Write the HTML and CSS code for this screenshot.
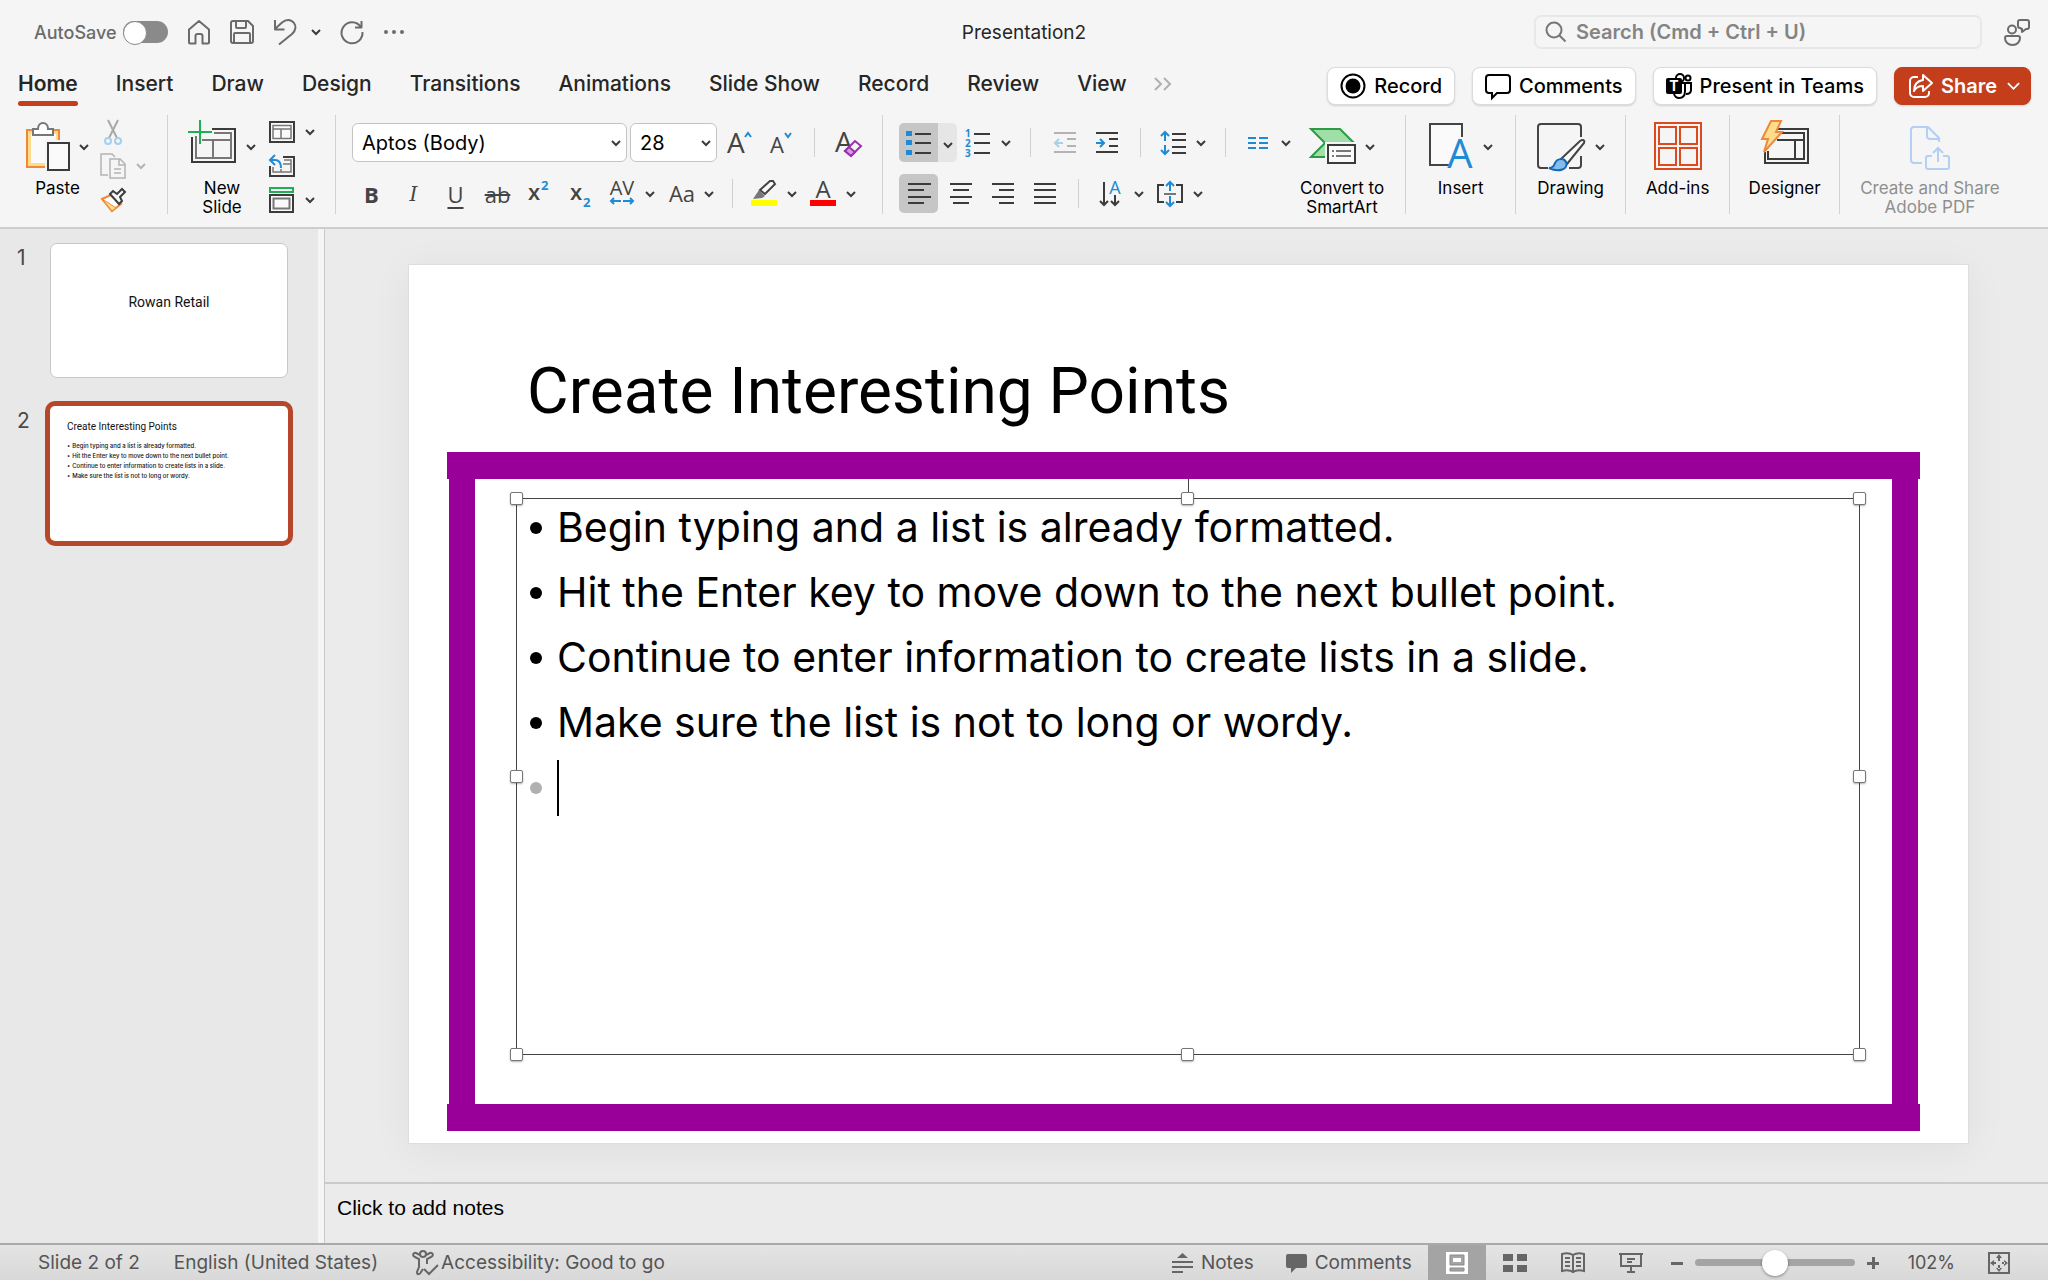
FILE: index.html
```
<!DOCTYPE html>
<html lang="en">
<head>
    <meta charset="UTF-8">
    <title>Presentation2</title>
    <link rel="stylesheet" href="styles.css">
</head>
<body>

    <svg class="sprite" aria-hidden="true">
        <symbol id="chev" viewBox="0 0 10 8">
            <path d="M1 2l4 4 4-4" fill="none" stroke="currentColor" stroke-width="2"/>
        </symbol>
    </svg>

    <header>
        <div class="titlebar">
            <div class="quick">
                <label class="autosave">AutoSave <input type="checkbox" class="toggle"></label>
                <button class="quick-btn" aria-label="Home">
                    <svg width="24" height="26" viewBox="0 0 24 26"><path d="M2 10.500L12 2l10 8.500V23.500a1 1 0 0 1-1 1h-5.500V17a2 2 0 0 0-2-2h-3a2 2 0 0 0-2 2v7.500H3a1 1 0 0 1-1-1z"/></svg>
                </button>
                <button class="quick-btn" aria-label="Save">
                    <svg width="24" height="24" viewBox="0 0 24 24"><path d="M3 1h15l5 5v15a2 2 0 0 1-2 2H3a2 2 0 0 1-2-2V3a2 2 0 0 1 2-2zM6 1v6a1 1 0 0 0 1 1h8a1 1 0 0 0 1-1V1M4 23v-9a1 1 0 0 1 1-1h14a1 1 0 0 1 1 1v9"/></svg>
                </button>
                <button class="quick-btn undo" aria-label="Undo">
                    <svg width="24" height="26" viewBox="0 0 24 26"><path d="M2 1v9.500h9.500M2 10L9 3.500C13 0 18 0 21 4s1 8-2 11L6 25.500"/></svg>
                    <svg class="chev"><use href="#chev"/></svg>
                </button>
                <button class="quick-btn" aria-label="Redo">
                    <svg width="24" height="24" viewBox="0 0 24 24"><path d="M21.500 1v6.500H15M20.800 7A10.500 10.500 0 1 0 22.500 12"/></svg>
                </button>
                <button class="quick-btn" aria-label="More">
                    <svg class="dots" width="22" height="6" viewBox="0 0 22 6"><circle cx="3" cy="3" r="2"/><circle cx="11" cy="3" r="2"/><circle cx="19" cy="3" r="2"/></svg>
                </button>
            </div>
            <div class="doc-name">Presentation2</div>
            <div class="title-right">
                <label class="search">
                    <svg width="22" height="22" viewBox="0 0 22 22"><circle cx="9" cy="9" r="7.500"/><path d="M14.500 14.500l6 6"/></svg>
                    <input type="text" placeholder="Search (Cmd + Ctrl + U)" aria-label="Search">
                </label>
                <button class="quick-btn" aria-label="Feedback">
                    <svg width="26" height="27" viewBox="0 0 26 27"><circle cx="8" cy="10.500" r="4"/><path d="M3 17h11a2 2 0 0 1 2 2c0 4-3 7-7.500 7S1 23 1 19a2 2 0 0 1 2-2zM16 1h7a2 2 0 0 1 2 2v5a2 2 0 0 1-2 2h-1l-4 3v-3l-2-1a2 2 0 0 1-2-2V3a2 2 0 0 1 2-2z"/></svg>
                </button>
            </div>
        </div>

        <div class="tab-row">
            <nav class="tabs">
                <button class="tab active">Home</button>
                <button class="tab">Insert</button>
                <button class="tab">Draw</button>
                <button class="tab">Design</button>
                <button class="tab">Transitions</button>
                <button class="tab">Animations</button>
                <button class="tab">Slide Show</button>
                <button class="tab">Record</button>
                <button class="tab">Review</button>
                <button class="tab">View</button>
                <button class="tab more" aria-label="More tabs">
                    <svg width="20" height="14" viewBox="0 0 20 14"><path d="M2 1l6 6-6 6M11 1l6 6-6 6"/></svg>
                </button>
            </nav>
            <div class="actions">
                <button class="action">
                    <svg width="26" height="26" viewBox="0 0 26 26"><circle cx="13" cy="13" r="11.500" fill="none" stroke="#000" stroke-width="2"/><circle cx="13" cy="13" r="7.500"/></svg>
                    Record
                </button>
                <button class="action">
                    <svg width="26" height="26" viewBox="0 0 26 26"><path d="M4 2h18a3 3 0 0 1 3 3v12a3 3 0 0 1-3 3H12l-5 5v-5H4a3 3 0 0 1-3-3V5a3 3 0 0 1 3-3z" fill="none" stroke="#000" stroke-width="2"/></svg>
                    Comments
                </button>
                <button class="action">
                    <svg width="26" height="26" viewBox="0 0 26 26">
                        <g fill="none" stroke="#000" stroke-width="2"><circle cx="14" cy="5" r="4"/><circle cx="22" cy="5" r="2.500"/><path d="M14 10h5v8c0 4-2 7-6 7-2 0-4-1-5-4M20 10h5v7c0 3-2 4-5 4"/></g>
                        <rect y="5" width="16" height="16" rx="2"/><text x="8" y="18" text-anchor="middle" fill="#fff" font-size="14" font-weight="700">T</text>
                    </svg>
                    Present in Teams
                </button>
                <button class="action share">
                    <svg width="24" height="24" viewBox="0 0 24 24"><path d="M9 3H5a4 4 0 0 0-4 4v12a4 4 0 0 0 4 4h11a4 4 0 0 0 4-4v-2M14 6V1l9 8-9 8v-5c-4 0-7 1-9 5 0-6 3-10 9-11z" fill="none" stroke="#fff" stroke-width="2" stroke-linejoin="round"/></svg>
                    Share
                    <svg class="chev-big" viewBox="0 0 14 8"><path d="M1 1l6 6 6-6" fill="none" stroke="#fff" stroke-width="2"/></svg>
                </button>
            </div>
        </div>

        <div class="ribbon">
            <!-- clipboard -->
            <div class="group clipboard">
                <button class="big">
                    <span class="big-icon">
                        <svg width="44" height="50" viewBox="0 0 44 50">
                            <path d="M1 8h32v37H1z" fill="#fddc8c" stroke="#f0883a" stroke-width="2"/>
                            <path d="M5 12h25v29H5z" fill="#fafafa"/>
                            <path d="M7 13V7h5c0-8 10-8 10 0h5v6z" fill="#fff" stroke="#777" stroke-width="2"/>
                            <path d="M19 18h27v32H19z" fill="#f5f5f5"/>
                            <path d="M22 21h21v27H22z" fill="#fafafa" stroke="#3b3b3b" stroke-width="2"/>
                        </svg>
                        <svg class="chev"><use href="#chev"/></svg>
                    </span>
                    Paste
                </button>
                <div class="stack">
                    <button class="mini" aria-label="Cut">
                        <svg width="26" height="26" viewBox="0 0 26 26"><path d="M8 1l9 18M18 1L9 19" fill="none" stroke="#a9a9a9" stroke-width="2"/><g fill="none" stroke="#a3cff0" stroke-width="2"><circle cx="8" cy="22" r="3"/><circle cx="18" cy="22" r="3"/></g></svg>
                    </button>
                    <button class="mini faded" aria-label="Copy">
                        <svg width="26" height="26" viewBox="0 0 26 26"><path d="M8 22H1V1h11l3 3M10 6h10l5 5v14H10zM19 6v6h6M14 16h7M14 20h7" fill="none" stroke="#b4b4b4" stroke-width="1.500"/></svg>
                        <svg class="chev"><use href="#chev"/></svg>
                    </button>
                    <button class="mini" aria-label="Format painter">
                        <svg width="26" height="26" viewBox="0 0 26 26"><path d="M11 8l10 9-9 7L2 12z" fill="#fff" stroke="#f0883a" stroke-width="2"/><path d="M3 13l4 2 9 6-4 3z" fill="#fddc8c" stroke="#f0883a"/><path d="M10 7l3-3 4 3 5-5 3 3-5 5 2 4-3 3z" fill="#f5f5f5" stroke="#3b3b3b" stroke-width="2"/></svg>
                    </button>
                </div>
            </div>

            <!-- slides -->
            <div class="group slides">
                <button class="big">
                    <span class="big-icon">
                        <svg width="49" height="50" viewBox="0 0 49 50">
                            <path d="M4 15v25h43V7H24" fill="none" stroke="#3b3b3b" stroke-width="2"/>
                            <path d="M8 14v22h35V11H26M14 18h29M25 18v18" fill="none" stroke="#777" stroke-width="2"/>
                            <path d="M12-2v24M0 10h24" stroke="#1faf54" stroke-width="2"/>
                        </svg>
                        <svg class="chev"><use href="#chev"/></svg>
                    </span>
                    New<br>Slide
                </button>
                <div class="stack">
                    <button class="mini" aria-label="Layout">
                        <svg width="26" height="22" viewBox="0 0 26 22"><path d="M1 1h24v20H1z" fill="#fafafa" stroke="#3b3b3b" stroke-width="2"/><path d="M4 4.500h18v13H4zM4 8h18M12 8v9" fill="none" stroke="#777" stroke-width="1.500"/></svg>
                        <svg class="chev"><use href="#chev"/></svg>
                    </button>
                    <button class="mini" aria-label="Reset">
                        <svg width="26" height="24" viewBox="0 0 26 24"><path d="M14 3h11v19H1V12" fill="none" stroke="#3b3b3b" stroke-width="2"/><path d="M15 6h7v12H4v-5M14 10h8M12 15v3" fill="none" stroke="#777" stroke-width="1.500"/><path d="M6 1L1 6l5 5M1 6h5c4 0 6 3 6 8" fill="none" stroke="#1e8bd4" stroke-width="2"/></svg>
                    </button>
                    <button class="mini" aria-label="Section">
                        <svg width="26" height="26" viewBox="0 0 26 26"><path d="M1 1h23v4H1z" fill="none" stroke="#1faf54" stroke-width="2"/><path d="M1 8h23v17H1z" fill="#fafafa" stroke="#3b3b3b" stroke-width="2"/><path d="M4.500 11.500h16v10h-16z" fill="none" stroke="#777" stroke-width="2"/></svg>
                        <svg class="chev"><use href="#chev"/></svg>
                    </button>
                </div>
            </div>

            <!-- font -->
            <div class="group font">
                <div class="rows">
                    <div class="row">
                        <span class="drop font-name">
                            <select aria-label="Font"><option>Aptos (Body)</option></select>
                            <svg class="chev"><use href="#chev"/></svg>
                        </span>
                        <span class="drop font-size">
                            <select aria-label="Font size"><option>28</option></select>
                            <svg class="chev"><use href="#chev"/></svg>
                        </span>
                        <button class="tool" aria-label="Grow font"><svg width="26" height="26" viewBox="0 0 26 26"><text x="0" y="23" font-size="28">A</text><path class="blue" d="M18 7l3-4 3 4"/></svg></button>
                        <button class="tool" aria-label="Shrink font"><svg width="26" height="26" viewBox="0 0 26 26"><text x="1" y="23" font-size="22">A</text><path class="blue" d="M16 3l3 4 3-4"/></svg></button>
                        <span class="sep"></span>
                        <button class="tool" aria-label="Clear formatting"><svg width="26" height="26" viewBox="0 0 26 26"><text x="0" y="22" font-size="28">A</text><path d="M10 21l10-10 6 5-10 10z" fill="#f5f5f5" stroke="#9b2fae" stroke-width="2"/><path d="M10 21l4-4 6 5-4 4z" fill="#d59adf" stroke="#9b2fae" stroke-width="2"/></svg></button>
                    </div>
                    <div class="row">
                        <button class="tool bold">B</button>
                        <button class="tool italic">I</button>
                        <button class="tool underline">U</button>
                        <button class="tool strike">ab</button>
                        <button class="tool" aria-label="Superscript"><svg width="26" height="26" viewBox="0 0 26 26"><text x="1" y="19" font-size="22" font-weight="600">x</text><text class="blue-text" x="14" y="9" font-size="13">2</text></svg></button>
                        <button class="tool" aria-label="Subscript"><svg width="26" height="26" viewBox="0 0 26 26"><text x="1" y="19" font-size="22" font-weight="600">x</text><text class="blue-text" x="14" y="26" font-size="13">2</text></svg></button>
                        <button class="split" aria-label="Character spacing">
                            <svg width="26" height="26" viewBox="0 0 26 26"><text x="13" y="14" font-size="20" text-anchor="middle">AV</text><path class="blue" d="M12 20H2M5 17l-3 3 3 3M14 20h10M21 17l3 3-3 3"/></svg>
                            <svg class="chev"><use href="#chev"/></svg>
                        </button>
                        <button class="split" aria-label="Change case">
                            <svg width="26" height="26" viewBox="0 0 26 26"><text x="14" y="21" font-size="22" text-anchor="middle">Aa</text></svg>
                            <svg class="chev"><use href="#chev"/></svg>
                        </button>
                        <span class="sep"></span>
                        <button class="split" aria-label="Highlight">
                            <svg width="26" height="26" viewBox="0 0 26 26"><path d="M0 19h26v6H0z" class="swatch yellow"/><path d="M9 9L19 0h3l2 3-10 10z" fill="#fafafa" stroke="#444" stroke-width="2"/><path d="M8 9l6 6-3 2-9 1z" fill="#777" stroke="none"/></svg>
                            <svg class="chev"><use href="#chev"/></svg>
                        </button>
                        <button class="split" aria-label="Font color">
                            <svg width="26" height="26" viewBox="0 0 26 26"><path d="M0 19h26v6H0z" class="swatch red"/><text x="13" y="17" font-size="24" text-anchor="middle">A</text></svg>
                            <svg class="chev"><use href="#chev"/></svg>
                        </button>
                    </div>
                </div>
            </div>

            <!-- paragraph -->
            <div class="group paragraph">
                <div class="rows">
                    <div class="row">
                        <span class="pair">
                            <button class="tool pressed" aria-label="Bullets"><svg width="26" height="26" viewBox="0 0 26 26"><path class="fill-blue" d="M0 1h6v5H0zM0 10h6v5H0zM0 20h6v5H0z"/><path d="M9 4h16M9 13h16M9 23h16"/></svg></button>
                            <button class="pair-arrow" aria-label="Bullet styles"><svg class="chev"><use href="#chev"/></svg></button>
                        </span>
                        <button class="split" aria-label="Numbering">
                            <svg width="26" height="26" viewBox="0 0 26 26"><g class="blue-text" font-size="10"><text x="0" y="7">1</text><text x="0" y="17">2</text><text x="0" y="27">3</text></g><path d="M9 4h16M9 13h16M9 23h16"/></svg>
                            <svg class="chev"><use href="#chev"/></svg>
                        </button>
                        <span class="sep"></span>
                        <button class="tool disabled" aria-label="Decrease indent"><svg width="24" height="24" viewBox="0 0 24 24"><path d="M1 2h22M14 8h9M14 15h9M1 21h22"/><path class="blue" d="M10 12H2M6 8l-4 4 4 4"/></svg></button>
                        <button class="tool" aria-label="Increase indent"><svg width="24" height="24" viewBox="0 0 24 24"><path d="M1 2h22M14 8h9M14 15h9M1 21h22"/><path class="blue" d="M1 12h8M5 8l4 4-4 4"/></svg></button>
                        <span class="sep"></span>
                        <button class="split" aria-label="Line spacing">
                            <svg width="26" height="26" viewBox="0 0 26 26"><path d="M12 4h14M12 10h14M12 17h14M12 23h14"/><path class="blue" d="M5 11V3M1 6l4-4 4 4M5 15v8M1 20l4 4 4-4"/></svg>
                            <svg class="chev"><use href="#chev"/></svg>
                        </button>
                        <span class="sep"></span>
                        <button class="split" aria-label="Columns">
                            <svg width="26" height="26" viewBox="0 0 26 26"><path class="blue" d="M3 8h8M3 13h8M3 18h8M14 8h9M14 13h9M14 18h9"/></svg>
                            <svg class="chev"><use href="#chev"/></svg>
                        </button>
                    </div>
                    <div class="row">
                        <button class="tool pressed" aria-label="Align left"><svg width="24" height="24" viewBox="0 0 24 24"><path d="M1 2h23M1 8h16M1 15h23M1 21h16"/></svg></button>
                        <button class="tool" aria-label="Align center"><svg width="24" height="24" viewBox="0 0 24 24"><path d="M1 2h22M4 8h16M1 15h22M4 21h16"/></svg></button>
                        <button class="tool" aria-label="Align right"><svg width="24" height="24" viewBox="0 0 24 24"><path d="M1 2h22M8 8h15M1 15h22M8 21h15"/></svg></button>
                        <button class="tool" aria-label="Justify"><svg width="24" height="24" viewBox="0 0 24 24"><path d="M1 2h22M1 8h22M1 15h22M1 21h22"/></svg></button>
                        <span class="sep"></span>
                        <button class="split" aria-label="Text direction">
                            <svg width="26" height="26" viewBox="0 0 26 26"><path d="M6 1v23M2 20l4 4 4-4M17 14v10M13 20l4 4 4-4"/><text class="blue-text thin" x="17" y="13" font-size="18" text-anchor="middle">A</text></svg>
                            <svg class="chev"><use href="#chev"/></svg>
                        </button>
                        <button class="split" aria-label="Align text">
                            <svg width="26" height="26" viewBox="0 0 26 26"><path d="M7 4H1v17h6M19 4h6v17h-6"/><path d="M7 13h12" stroke="#777"/><path class="blue" d="M13 10V2M9 5l4-4 4 4M13 15v9M9 21l4 4 4-4"/></svg>
                            <svg class="chev"><use href="#chev"/></svg>
                        </button>
                    </div>
                </div>
                <button class="big">
                    <span class="big-icon">
                        <svg width="46" height="50" viewBox="0 0 46 50">
                            <path d="M1 7h29l14 14v14H1l14-14z" fill="#a1dfa9" stroke="#2c9b47" stroke-width="2"/>
                            <path d="M15 20h32v24H15z" fill="#f5f5f5"/>
                            <path d="M18 23h27v18H18z" fill="#fafafa" stroke="#3b3b3b" stroke-width="2"/>
                            <path d="M22 29h2M26 29h15M22 34h2M26 34h15" stroke="#777" stroke-width="2"/>
                        </svg>
                        <svg class="chev"><use href="#chev"/></svg>
                    </span>
                    Convert to<br>SmartArt
                </button>
            </div>

            <div class="group command">
                <button class="big">
                    <span class="big-icon">
                        <svg width="45" height="50" viewBox="0 0 45 50"><path d="M20 43H1V2h32v13" fill="#fafafa" stroke="#444" stroke-width="2"/><path d="M18 48l12-32h4l12 32z" fill="#f5f5f5"/><text class="blue-text thin" x="31" y="46" font-size="40" text-anchor="middle">A</text></svg>
                        <svg class="chev"><use href="#chev"/></svg>
                    </span>
                    Insert
                </button>
            </div>
            <div class="group command">
                <button class="big">
                    <span class="big-icon">
                        <svg width="49" height="50" viewBox="0 0 49 50"><path d="M11 46H4a3 3 0 0 1-3-3V5a3 3 0 0 1 3-3h37a3 3 0 0 1 3 3v10M44 34v9a3 3 0 0 1-3 3H32" fill="none" stroke="#444" stroke-width="2"/><path d="M24 37L43 19c3-2 5-1 4 2L30 42z" fill="#fafafa" stroke="#444" stroke-width="2"/><path d="M12 46c5 0 5-3 6-5 2-5 9-5 11-1 3 7-7 11-17 6z" fill="#83bdec" stroke="#1668b5" stroke-width="2"/></svg>
                        <svg class="chev"><use href="#chev"/></svg>
                    </span>
                    Drawing
                </button>
            </div>
            <div class="group command narrow">
                <button class="big">
                    <span class="big-icon">
                        <svg width="48" height="50" viewBox="0 0 48 50"><path d="M1 1h46v46H1zM5 5h17v17H5zM26 5h17v17H26zM5 26h17v17H5zM26 26h17v17H26z" fill="none" stroke="#dc4a20" stroke-width="2"/></svg>
                    </span>
                    Add-ins
                </button>
            </div>
            <div class="group command">
                <button class="big">
                    <span class="big-icon">
                        <svg width="48" height="50" viewBox="0 0 48 50"><path d="M17 7h30v34H4V30" fill="none" stroke="#3b3b3b" stroke-width="2"/><path d="M18 11h25v26H7v-8M16 18h27M34 18v19" fill="none" stroke="#3b3b3b" stroke-width="2"/><path d="M10-1h10l-5 11h6L3 30 7 17H1z" fill="#fddc8c" stroke="#f0883a" stroke-width="2"/></svg>
                    </span>
                    Designer
                </button>
            </div>
            <div class="group last">
                <button class="big" disabled>
                    <span class="big-icon">
                        <svg width="40" height="50" viewBox="0 0 40 50"><g fill="none" stroke="#b3cff5" stroke-width="2"><path d="M12 41H4a3 3 0 0 1-3-3V8a3 3 0 0 1 3-3h14l11 11v4M17 5v9a3 3 0 0 0 3 3h9M22 34h-4a2 2 0 0 0-2 2v9a2 2 0 0 0 2 2h19a2 2 0 0 0 2-2v-9a2 2 0 0 0-2-2h-4M28 40V26M23 31l5-5 5 5"/></g></svg>
                    </span>
                    Create and Share<br>Adobe PDF
                </button>
            </div>
        </div>
    </header>

    <main>
        <aside class="thumbs">
            <div class="thumb-row">
                <span class="thumb-num">1</span>
                <button class="thumb first">Rowan Retail</button>
            </div>
            <div class="thumb-row">
                <span class="thumb-num">2</span>
                <button class="thumb selected">
                    <span class="thumb-title">Create Interesting Points</span>
                    <span class="thumb-line">Begin typing and a list is already formatted.</span>
                    <span class="thumb-line">Hit the Enter key to move down to the next bullet point.</span>
                    <span class="thumb-line">Continue to enter information to create lists in a slide.</span>
                    <span class="thumb-line">Make sure the list is not to long or wordy.</span>
                </button>
            </div>
        </aside>

        <section class="editor">
            <div class="stage">
                <article class="slide">
                    <h1>Create Interesting Points</h1>
                    <div class="frame">
                        <div class="frame-bar"></div>
                        <div class="frame-body">
                            <div class="textbox">
                                <ul>
                                    <li>Begin typing and a list is already formatted.</li>
                                    <li>Hit the Enter key to move down to the next bullet point.</li>
                                    <li>Continue to enter information to create lists in a slide.</li>
                                    <li>Make sure the list is not to long or wordy.</li>
                                    <li class="empty"><span class="caret"></span></li>
                                </ul>
                                <span class="stem"></span>
                                <span class="handle top left"></span>
                                <span class="handle top center"></span>
                                <span class="handle top right"></span>
                                <span class="handle middle left"></span>
                                <span class="handle middle right"></span>
                                <span class="handle bottom left"></span>
                                <span class="handle bottom center"></span>
                                <span class="handle bottom right"></span>
                            </div>
                        </div>
                        <div class="frame-bar"></div>
                    </div>
                </article>
            </div>
            <textarea class="notes" rows="1" placeholder="Click to add notes" aria-label="Notes"></textarea>
        </section>
    </main>

    <footer>
        <div class="status-left">
            <span>Slide 2 of 2</span>
            <span>English (United States)</span>
            <button class="status-btn access">
                <svg width="26" height="26" viewBox="0 0 26 26"><g fill="none" stroke="#666" stroke-width="2"><circle cx="11" cy="4" r="3"/><path d="M8 5L4 3C1 2 0 6 3 7l4 2v8L5 22c0 3 3 3 4 0l2-3M14 5l4-2c3-1 4 3 1 4l-4 2v5M12 19l5 5 9-9"/></g></svg>
                Accessibility: Good to go
            </button>
        </div>
        <div class="status-right">
            <button class="status-btn notes-btn">
                <svg width="21" height="20" viewBox="0 0 21 20"><path d="M5 5l5.500-5L16 5z"/><path d="M0 8h21v2H0zM0 13h21v2H0zM0 18h11v2H0z"/></svg>
                Notes
            </button>
            <button class="status-btn comments-btn">
                <svg width="21" height="20" viewBox="0 0 21 20"><path d="M2 1h17a2 2 0 0 1 2 2v10a2 2 0 0 1-2 2h-9l-5 5v-5H2a2 2 0 0 1-2-2V3a2 2 0 0 1 2-2z"/></svg>
                Comments
            </button>
            <button class="view current" aria-label="Normal view"><svg width="22" height="22" viewBox="0 0 22 22"><path d="M0 0h22v22H0z" fill="#fff"/><path d="M4 3h14v10H4zM4 16h14v3H4z" fill="#a4a4a4" stroke="#8a8a8a"/><path d="M7 6h8v4H7z" fill="#fff"/></svg></button>
            <button class="view" aria-label="Slide sorter"><svg width="24" height="18" viewBox="0 0 24 18"><path d="M0 0h10v7H0zM14 0h10v7H14zM0 11h10v7H0zM14 11h10v7H14z"/></svg></button>
            <button class="view" aria-label="Reading view"><svg width="24" height="22" viewBox="0 0 24 22"><path d="M1 2c4-1 8-1 11 1 3-2 7-2 11-1v17c-4-1-8-1-11 1-3-2-7-2-11-1zM12 3v18M4 6h5M4 10h5M4 14h5M15 6h5M15 10h5M15 14h5" fill="none" stroke="#666" stroke-width="2"/></svg></button>
            <button class="view" aria-label="Slide show"><svg width="24" height="20" viewBox="0 0 24 20"><path d="M0 1h24M2 2v11h20V2M8 6h8M8 9h5M12 13v6M8 19h8" fill="none" stroke="#666" stroke-width="2"/></svg></button>
            <div class="zoom">
                <button aria-label="Zoom out"><svg width="12" height="12" viewBox="0 0 12 12"><path d="M0 5h12v3H0z"/></svg></button>
                <input type="range" min="0" max="202" value="102" aria-label="Zoom">
                <button aria-label="Zoom in"><svg width="12" height="12" viewBox="0 0 12 12"><path d="M0 5h12v3H0zM5 0h3v12H5z"/></svg></button>
                <span class="percent">102%</span>
                <button aria-label="Fit slide to window"><svg width="22" height="22" viewBox="0 0 22 22"><path d="M1 1h20v20H1z" fill="none" stroke="#666" stroke-width="2"/><path d="M11 2l3 4h-6zM11 20l3-4h-6zM2 11l4-3v6zM20 11l-4-3v6zM10 5h2v4h-2zM10 13h2v4h-2zM5 10h3v2H5zM14 10h3v2h-3z"/></svg></button>
            </div>
        </div>
    </footer>

</body>
</html>
```
FILE: styles.css
```
* {
    box-sizing: border-box;
}

body {
    margin: 0;
    height: 100vh;
    display: flex;
    flex-direction: column;
    font-family: Inter, sans-serif;
    font-size: 18px;
    color: #262626;
    background: #f5f5f5;
}

button {
    padding: 0;
    border: none;
    background: none;
    font: inherit;
    color: inherit;
    cursor: pointer;
}

svg {
    flex: none;
    overflow: visible;
}

.sprite {
    position: absolute;
    width: 0;
    height: 0;
}

.chev {
    width: 10px;
    height: 8px;
    color: #3b3b3b;
}

/* title bar */
.titlebar {
    display: grid;
    grid-template-columns: 1fr auto 1fr;
    align-items: center;
    height: 64px;
    padding: 0 18px;
}

.quick {
    display: flex;
    align-items: center;
    gap: 19px;
    padding-left: 16px;
}

.autosave {
    display: flex;
    align-items: center;
    gap: 6px;
    color: #6b6b6b;
    font-weight: 500;
}

.toggle {
    appearance: none;
    width: 45px;
    height: 22px;
    margin: 0;
    border-radius: 11px;
    background: #8a8a8a;
}

.toggle::before {
    content: "";
    display: block;
    width: 22px;
    height: 22px;
    border: 1px solid #8a8a8a;
    border-radius: 50%;
    background: #fff;
}

.quick-btn {
    display: flex;
    align-items: center;
    gap: 14px;
    color: #444;
}

.quick-btn svg:not(.chev) {
    fill: none;
    stroke: #6b6b6b;
    stroke-width: 2;
    stroke-linejoin: round;
}

.quick-btn .dots {
    fill: #6b6b6b !important;
    stroke: none !important;
}

.doc-name {
    font-size: 19px;
}

.title-right {
    display: flex;
    justify-content: flex-end;
    align-items: center;
    gap: 22px;
}

.search {
    display: flex;
    align-items: center;
    gap: 9px;
    width: 448px;
    height: 34px;
    padding: 0 9px;
    border: 2px solid #e8e8e8;
    border-radius: 7px;
}

.search svg {
    fill: none;
    stroke: #777;
    stroke-width: 2;
}

.search input {
    flex: 1;
    min-width: 0;
    padding: 0;
    border: none;
    outline: none;
    background: none;
    font: 600 20px Inter, sans-serif;
}

.search input::placeholder {
    color: #848484;
}

/* tabs */
.tab-row {
    display: flex;
    justify-content: space-between;
    align-items: flex-start;
    height: 51px;
    padding: 0 17px 0 18px;
}

.tabs {
    display: flex;
    gap: 38px;
}

.tab {
    padding: 8px 0 5px;
    border-bottom: 5px solid transparent;
    font-size: 21px;
    line-height: 24px;
    font-weight: 500;
}

.tab.active {
    position: relative;
    font-weight: 600;
}

.tab.active::after {
    content: "";
    position: absolute;
    left: 0;
    right: 0;
    bottom: -5px;
    height: 5px;
    border-radius: 3px;
    background: #c43e1c;
}

.tab.more {
    margin-left: -12px;
}

.tab.more svg {
    fill: none;
    stroke: #b0b0b0;
    stroke-width: 2;
}

.actions {
    display: flex;
    gap: 17px;
    padding-top: 3px;
}

.action {
    display: flex;
    align-items: center;
    gap: 8px;
    height: 38px;
    padding: 0 12px;
    border: 1px solid #dcdcdc;
    border-radius: 8px;
    background: #fff;
    box-shadow: 0 1px 2px rgba(0,0,0,0.15);
    font-size: 20px;
    font-weight: 500;
    color: #000;
}

.action.share {
    padding: 0 10px 0 14px;
    border-color: #c43e1c;
    background: #c43e1c;
    color: white;
    font-weight: 600;
}

.chev-big {
    width: 13px;
    height: 8px;
    margin-left: 2px;
}

/* ribbon */
.ribbon {
    display: flex;
    padding-bottom: 13px;
    border-bottom: 2px solid #cdcdcd;
}

.group {
    display: flex;
    justify-content: center;
    height: 99px;
    border-right: 1px solid #d2d2d2;
}

.clipboard {
    gap: 11px;
    padding: 0 21px 0 26px;
}

.slides {
    gap: 13px;
    padding: 0 20px;
}

.font {
    padding: 0 15px 0 16px;
}

.paragraph {
    gap: 4px;
    padding: 0 21px 0 16px;
}

.command {
    width: 110px;
}

.narrow {
    width: 104px;
}

.last {
    padding-left: 20px;
    border-right: none;
}

.big {
    display: flex;
    flex-direction: column;
    align-items: center;
    padding-top: 7px;
    font-size: 17px;
    line-height: 19px;
    color: #000;
}

.big:disabled {
    color: #8f8f8f;
}

.big-icon {
    display: flex;
    align-items: center;
    gap: 9px;
    height: 50px;
    margin-bottom: 7px;
}

.stack {
    display: grid;
    grid-template-rows: repeat(3, 34px);
}

.mini {
    display: flex;
    align-items: center;
    gap: 10px;
}

.mini.faded .chev {
    color: #b4b4b4;
}

.rows {
    display: flex;
    flex-direction: column;
    gap: 12px;
    padding-top: 8px;
}

.row {
    display: flex;
    gap: 3px;
    height: 39px;
}

.drop {
    position: relative;
    display: flex;
}

.drop select {
    appearance: none;
    width: 100%;
    padding: 0 9px;
    border: 1px solid #c4c4c4;
    border-radius: 6px;
    background: #fff;
    font: 20px Inter, sans-serif;
    color: #000;
}

.drop .chev {
    position: absolute;
    right: 6px;
    top: 16px;
    pointer-events: none;
}

.font-name {
    width: 275px;
}

.font-size {
    width: 87px;
}

.tool,
.split {
    display: flex;
    align-items: center;
    justify-content: center;
    width: 39px;
    border-radius: 5px;
    font-family: "Open Sans", sans-serif;
    font-size: 22px;
    line-height: 24px;
    color: #444;
}

.split {
    gap: 10px;
    width: 56px;
}

.tool svg:not(.chev),
.split svg:not(.chev) {
    fill: none;
    stroke: #3b3b3b;
    stroke-width: 2;
}

.tool text,
.split text {
    fill: #444;
    stroke: none;
    font-family: "Open Sans", sans-serif;
}

.tool .blue,
.split .blue {
    stroke: #1e8bd4;
}

.fill-blue {
    fill: #1e8bd4;
    stroke: none;
}

.swatch {
    stroke: none;
}

.swatch.yellow {
    fill: #ff0;
}

.swatch.red {
    fill: #f00;
}

.blue-text,
.tool .blue-text,
.split .blue-text,
.split .blue-text text {
    fill: #1e8bd4;
    font-weight: 700;
}

.big .thin,
.split .thin {
    font-family: "Open Sans", sans-serif;
    font-weight: 400;
}

.bold {
    font-weight: 700;
}

.italic {
    font-family: "DejaVu Serif", serif;
    font-style: italic;
    font-size: 20px;
}

.underline {
    text-decoration: underline;
    text-underline-offset: 4px;
}

.strike {
    text-decoration: line-through;
}

.pressed {
    background: #c6c6c6;
}

.disabled {
    opacity: 0.35;
}

.pair {
    display: flex;
    border-radius: 5px;
    background: #e6e6e6;
}

.pair .pressed {
    border-radius: 5px 0 0 5px;
}

.pair-arrow {
    width: 19px;
}

.sep {
    width: 1px;
    margin: 5px 11px;
    background: #d0d0d0;
}

.font .sep {
    margin: 5px 10px;
}

/* work area */
main {
    flex: 1;
    display: grid;
    grid-template-columns: 325px 1fr;
    min-height: 0;
    background: #ebebeb;
}

.thumbs {
    display: flex;
    flex-direction: column;
    gap: 28px;
    padding: 14px 0 0 17px;
    border-right: 1px solid #c8c8c8;
    box-shadow: inset -6px 0 #f5f5f5;
    background: #e8e8e8;
}

.thumb-row {
    display: flex;
    align-items: flex-start;
}

.thumb-num {
    width: 28px;
    padding-top: 3px;
    font-size: 21px;
    line-height: 24px;
    color: #4a4a4a;
}

.thumb {
    display: flex;
    flex-direction: column;
    width: 248px;
    height: 145px;
    padding: 13px 17px;
    border: 5px solid transparent;
    border-radius: 10px;
    background: #fff;
    color: #111;
    text-align: left;
}

.thumb.first {
    align-items: center;
    width: 238px;
    height: 135px;
    margin-left: 5px;
    padding-top: 50px;
    border: 1px solid #c8c8c8;
    border-radius: 7px;
    font: 14px Roboto, sans-serif;
}

.thumb.selected {
    margin-top: -5px;
    border-color: #b7472a;
}

.thumb-title {
    margin-bottom: 7px;
    font: 10px/15px Roboto, sans-serif;
}

.thumb-line {
    font-size: 6px;
    line-height: 10px;
    font-weight: 500;
    white-space: nowrap;
}

.thumb-line::before {
    content: "•";
    margin-right: 2px;
}

.editor {
    display: flex;
    flex-direction: column;
    min-width: 0;
}

.stage {
    flex: 1;
    display: flex;
    padding: 36px 80px 39px 84px;
}

.slide {
    flex: 1;
    display: flex;
    flex-direction: column;
    padding: 88px 48px 12px 38px;
    background: #fff;
    box-shadow: 0 0 0 1px #dedede, 0 6px 40px rgba(0,0,0,0.06);
    color: #000;
}

h1 {
    margin: 0 0 21px;
    padding-left: 80px;
    font: 64px/78px Roboto, sans-serif;
}

.frame {
    flex: 1;
    display: flex;
    flex-direction: column;
}

.frame-bar {
    height: 27px;
    background: #990099;
}

.frame-body {
    flex: 1;
    display: flex;
    margin: 0 2px;
    padding: 19px 32px 49px 41px;
    border: solid #990099;
    border-width: 0 26px;
}

.textbox {
    position: relative;
    flex: 1;
    border: 1px solid #444;
}

.textbox ul {
    display: flex;
    flex-direction: column;
    gap: 16px;
    margin: 0;
    padding: 4px 13px;
    list-style: none;
    font-size: 41px;
    line-height: 49px;
}

.textbox li {
    display: flex;
    align-items: center;
    gap: 15px;
    height: 49px;
}

.textbox li::before {
    content: "";
    width: 12px;
    height: 12px;
    border-radius: 50%;
    background: #000;
}

.textbox .empty::before {
    background: #b0b0b0;
}

.caret {
    flex: none;
    width: 2px;
    height: 56px;
    background: #000;
}

/* selection handles */
.handle {
    position: absolute;
    width: 13px;
    height: 13px;
    border: 1px solid #777;
    border-radius: 2px;
    background: #fff;
    box-shadow: 0 1px 2px rgba(0,0,0,0.3);
}

.handle.top { top: -7px; }
.handle.middle { top: calc(50% - 7px); }
.handle.bottom { bottom: -7px; }
.handle.left { left: -7px; }
.handle.center { left: calc(50% - 7px); }
.handle.right { right: -7px; }

.stem {
    position: absolute;
    left: 50%;
    top: -20px;
    width: 1px;
    height: 20px;
    background: #444;
}

.notes {
    display: block;
    height: 61px;
    padding: 12px;
    border: none;
    border-top: 2px solid #cacaca;
    outline: none;
    resize: none;
    background: #ebebeb;
    font: 21px "Liberation Sans", sans-serif;
}

.notes::placeholder {
    color: #000;
}

/* status bar */
footer {
    display: flex;
    justify-content: space-between;
    height: 37px;
    padding-left: 38px;
    border-top: 2px solid #a9a9a9;
    background: linear-gradient(#e4e4e4, #d8d8d8);
    font-size: 19px;
    color: #555;
}

.status-left {
    display: flex;
    align-items: center;
    gap: 34px;
}

.status-right {
    display: flex;
}

footer svg {
    fill: #666;
}

.status-btn {
    display: flex;
    align-items: center;
    gap: 8px;
}

.access {
    gap: 3px;
}

.notes-btn {
    margin-right: 32px;
}

.comments-btn {
    margin-right: 16px;
}

.view {
    display: flex;
    align-items: center;
    justify-content: center;
    width: 58px;
}

.view.current {
    background: #a4a4a4;
}

.zoom {
    display: flex;
    align-items: center;
    gap: 12px;
    padding: 0 38px 0 11px;
    font-size: 18px;
}

.zoom button {
    display: flex;
}

.zoom input {
    appearance: none;
    width: 160px;
    height: 26px;
    margin: 0;
    background: none;
}

.zoom input::-webkit-slider-runnable-track {
    height: 7px;
    border-radius: 4px;
    background: #a4a4a4;
}

.zoom input::-webkit-slider-thumb {
    appearance: none;
    width: 26px;
    height: 26px;
    margin-top: -9px;
    border-radius: 50%;
    background: #fff;
    box-shadow: 0 1px 3px rgba(0,0,0,0.4);
}

.percent {
    margin: 0 21px 0 17px;
}
```
